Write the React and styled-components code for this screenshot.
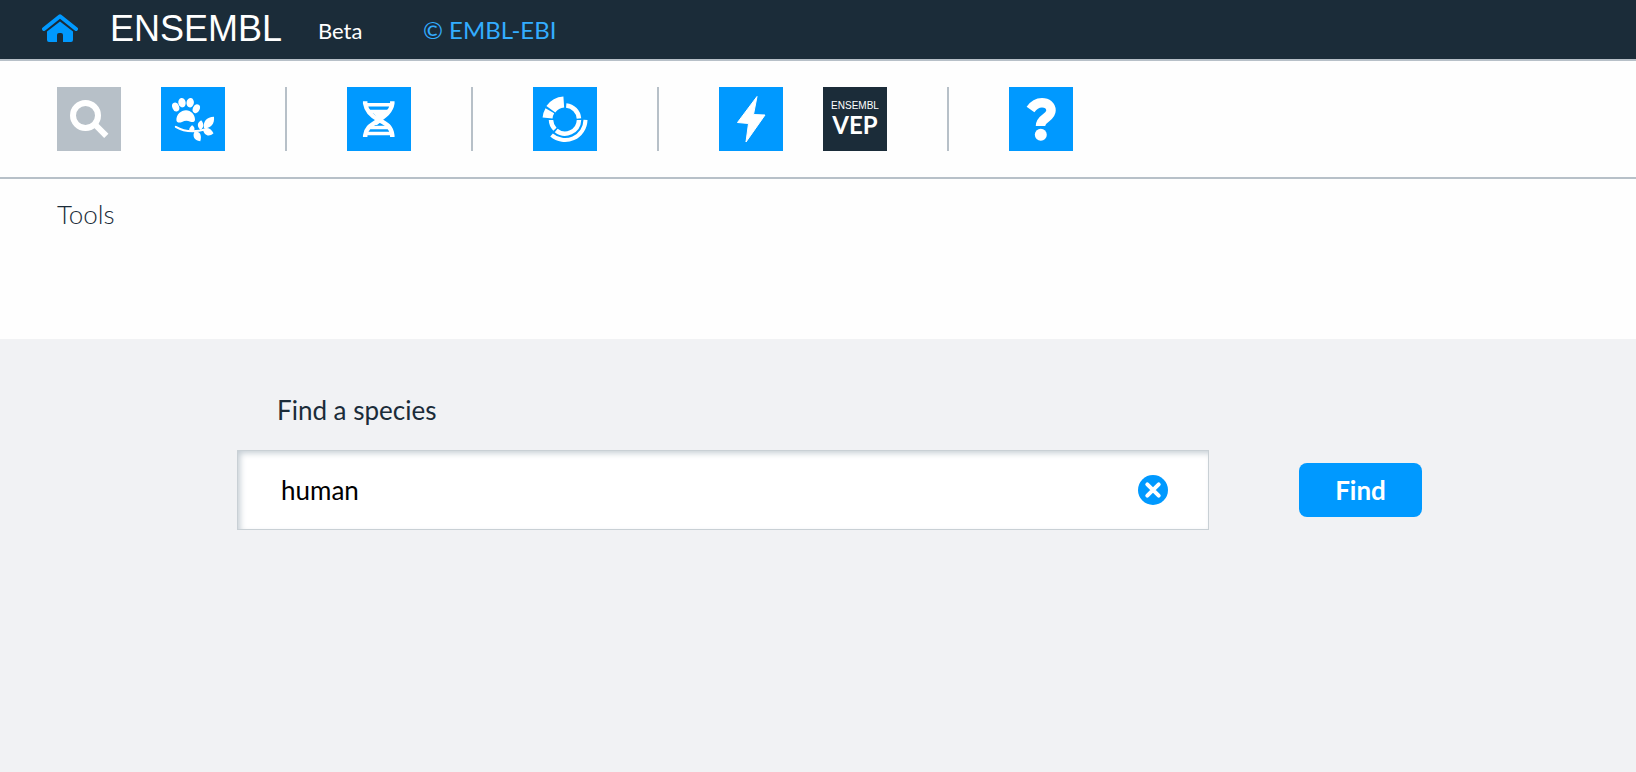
import React, { useState } from 'react';
import styled, { createGlobalStyle } from 'styled-components';

const color = {
  dark: '#1b2c39',
  blue: '#0099ff',
  link: '#33adff',
  grey: '#b7c0c8',
  rule: '#b7c0c8',
  panel: '#f1f2f4',
};

const GlobalStyle = createGlobalStyle`
  *, *::before, *::after { box-sizing: border-box; }
  body {
    margin: 0;
    background: #fefefe;
    color: ${color.dark};
    font-family: Lato, "Liberation Sans", sans-serif;
    font-size: 26px;
    line-height: 32px;
    text-rendering: optimizeLegibility;
  }
  button, input { font: inherit; }
`;

const Page = styled.div`
  display: flex;
  flex-direction: column;
  min-height: 100vh;
`;

const Header = styled.header`
  display: flex;
  align-items: center;
  height: 61px;
  padding: 0 42px 2px;
  background: ${color.dark};
  border-bottom: 2px solid ${color.rule};
`;

const HomeLink = styled.a`
  display: flex;
  margin-right: 32px;
  padding-bottom: 2px;
`;

const Wordmark = styled.span`
  min-width: 208px;
  color: #fff;
  font-family: "Liberation Sans", Arial, sans-serif;
  font-size: 36px;
  line-height: 40px;
`;

const Release = styled.span`
  min-width: 105px;
  padding-top: 4px;
  color: #fff;
  font-size: 22px;
`;

const Copyright = styled.a`
  color: ${color.link};
  font-size: 24px;
  padding-top: 2px;
  text-decoration: none;
`;

const Launchbar = styled.nav`
  display: flex;
  align-items: center;
  padding: 26px 57px;
  border-bottom: 2px solid ${color.rule};
`;

const Group = styled.div`
  display: flex;
  gap: 40px;

  & + & {
    margin-left: 60px;
    padding-left: 60px;
    border-left: 2px solid ${color.rule};
  }
`;

const AppButton = styled.button`
  display: flex;
  flex-direction: column;
  align-items: center;
  justify-content: center;
  width: 64px;
  height: 64px;
  padding: 0;
  border: 0;
  color: #fff;
  background: ${({ $tone }) => color[$tone || 'blue']};
  cursor: pointer;
`;

const VepBrand = styled.span`
  font-family: "Liberation Sans", Arial, sans-serif;
  font-size: 10px;
  line-height: 12px;
`;

const VepName = styled.span`
  font-size: 24px;
  font-weight: 700;
  line-height: 26px;
`;

const TopPanel = styled.section`
  height: 160px;
  padding: 19px 57px;
`;

const Title = styled.h1`
  margin: 0;
  font-size: 26px;
  font-weight: 300;
  line-height: 32px;
`;

const Main = styled.main`
  flex: 1;
  padding: 55px 214px 55px 237px;
  background: ${color.panel};
`;

const Label = styled.label`
  display: block;
  margin: 0 40px 24px;
`;

const SearchRow = styled.form`
  display: flex;
  align-items: center;
  gap: 90px;
`;

const Field = styled.div`
  display: flex;
  align-items: center;
  flex: 1;
  min-width: 0;
  height: 80px;
  padding: 0 40px 0 43px;
  background: #fff;
  border: 1px solid #c9d0d5;
  box-shadow: inset 3px 3px 6px -1px #c3ccd3;
`;

const Input = styled.input`
  flex: 1;
  min-width: 0;
  padding: 0;
  border: 0;
  outline: 0;
  background: transparent;
  color: #000;
`;

const ClearButton = styled.button`
  display: flex;
  padding: 0;
  border: 0;
  background: transparent;
  cursor: pointer;
`;

const FindButton = styled.button`
  width: 123px;
  height: 54px;
  padding: 0;
  border: 0;
  border-radius: 8px;
  background: ${color.blue};
  color: #fff;
  font-weight: 700;
  cursor: pointer;
`;

const Icon = ({ children }) => (
  <svg width="64" height="64" viewBox="0 0 64 64" fill="currentColor" aria-hidden="true">
    {children}
  </svg>
);

const HomeIcon = () => (
  <svg width="36" height="28" viewBox="0 0 36 28" aria-hidden="true">
    <path d="M2 15 18 2.3 34 15" fill="none" stroke={color.blue} strokeWidth="4" strokeLinecap="round" strokeLinejoin="round" />
    <path d="M5 17.5 18 7.5l13 10V26q0 2-2 2h-8v-7q0-2-2-2h-2q-2 0-2 2v7H7q-2 0-2-2z" fill={color.blue} />
  </svg>
);

const SearchIcon = () => (
  <Icon>
    <g fill="none" stroke="currentColor" strokeWidth="6">
      <circle cx="28.5" cy="28.5" r="12.5" />
      <path d="M37.5 37 49.3 48.8" />
    </g>
  </Icon>
);

const SpeciesIcon = () => (
  <Icon>
    <ellipse cx="14.7" cy="20" rx="3.4" ry="4.6" transform="rotate(-22 14.7 20)" />
    <ellipse cx="21" cy="15.7" rx="3.7" ry="4.7" transform="rotate(-8 21 15.7)" />
    <ellipse cx="29.2" cy="15.7" rx="3.7" ry="4.7" transform="rotate(10 29.2 15.7)" />
    <ellipse cx="35.3" cy="21.7" rx="3.4" ry="4.6" transform="rotate(24 35.3 21.7)" />
    <path d="M15.4 33.2C15.2 27.5 20 23.2 25 23.2c5 0 9 4.5 9 9.2 0 2.700-2.500 3.100-4.600 2.300-3.300-1.200-5.300-1.100-8.400.2-2.600 1.100-5.400.8-5.600-1.700z" />
    <path d="M14.8 39.8C21 43.5 30 46.4 45 42.2" fill="none" stroke="currentColor" strokeWidth="2" strokeLinecap="round" />
    <path d="M32.500 44.800c-4.200.2-6.300-2.500-1.500-6.600 2.500 1.500 3.300 3.900 1.500 6.600z" />
    <path d="M39.500 43c-4-3.500-3.200-7.500.7-9.700 3 3.500 3 7.200-.7 9.700z" />
    <path d="M43 41c-1.200-6.600 2.500-10.800 10-11.300.7 7.400-3.500 12-10 11.300z" />
    <path d="M42 42.500c3.300-3 7.800-1.600 10.500 3.800-4.500 4.100-9.500 2.200-10.500-3.800z" />
    <path d="M33.500 44.500c5.600-.6 7.500 3.500 5.800 9.800-6.500-.8-8-5.300-5.800-9.800z" />
  </Icon>
);

const DnaIcon = () => (
  <Icon>
    <g fill="none" stroke="currentColor" strokeWidth="4.500">
      <path d="M18.200 14.200v2.300C19.500 25 24.500 29.200 32 33c7.800 4 12.300 6.500 13.300 15.500v1.500" />
      <path d="M45.300 14.200v2.300C44 25 37.500 29 32 33c-7.500 5-12.800 7-13.800 15.500v1.500" />
    </g>
    <path d="M18 17.700h28M22 24.500h19M22 40.500h20M18 46.500h28" fill="none" stroke="currentColor" strokeWidth="3.600" />
    <path d="m25 25 7 7 8-7zM24 38l6-5 4 2-4 3z" />
  </Icon>
);

// Annular segment around the icon centre; angles are clockwise degrees from the top.
const arc = (radius, from, to) => {
  const point = (deg) => {
    const a = (deg * Math.PI) / 180;
    return `${32 + radius * Math.sin(a)} ${32.5 - radius * Math.cos(a)}`;
  };
  return `M${point(from)}A${radius} ${radius} 0 ${to - from > 180 ? 1 : 0} 1 ${point(to)}`;
};

const GenomeIcon = () => (
  <Icon>
    <g fill="none" stroke="currentColor">
      <path d={arc(14, 5, 86)} strokeWidth="4.500" />
      <path d={arc(14, 92, 219)} strokeWidth="4.500" />
      <path d={arc(14, 226, 268)} strokeWidth="4.500" />
      <path d={arc(17.5, 306, 356)} strokeWidth="11" />
      <path d={arc(17.5, 275, 300)} strokeWidth="10" />
      <path d={arc(20.5, 91, 221)} strokeWidth="4" />
    </g>
  </Icon>
);

const BoltIcon = () => (
  <Icon>
    <path d="m38 9.500-3.500 18L46 28 27 55l2.500-18.500-11-1z" stroke="currentColor" strokeLinejoin="round" />
  </Icon>
);

const HelpIcon = () => (
  <Icon>
    <path d="M21.500 22.500C25 17.500 28.500 15.800 33 15.800c5.300 0 9 3.100 9 7.700 0 7.500-10.500 7.200-10.500 15.500" fill="none" stroke="currentColor" strokeWidth="9.500" />
    <circle cx="31.8" cy="47.8" r="6" />
  </Icon>
);

const ClearIcon = () => (
  <svg width="30" height="30" viewBox="0 0 30 30" aria-hidden="true">
    <circle cx="15" cy="15" r="15" fill={color.blue} />
    <path d="m9.300 9.300 11.400 11.400m0-11.400L9.300 20.700" stroke="#fff" strokeWidth="4" strokeLinecap="round" />
  </svg>
);

export default function App() {
  const [query, setQuery] = useState('human');

  return (
    <Page>
      <GlobalStyle />
      <Header>
        <HomeLink href="#home" aria-label="Home"><HomeIcon /></HomeLink>
        <Wordmark>ENSEMBL</Wordmark>
        <Release>Beta</Release>
        <Copyright href="#embl-ebi">© EMBL-EBI</Copyright>
      </Header>
      <Launchbar aria-label="Applications">
        <Group>
          <AppButton $tone="grey" aria-label="Search"><SearchIcon /></AppButton>
          <AppButton aria-label="Species selector"><SpeciesIcon /></AppButton>
        </Group>
        <Group>
          <AppButton aria-label="Genome browser"><DnaIcon /></AppButton>
        </Group>
        <Group>
          <AppButton aria-label="Entity viewer"><GenomeIcon /></AppButton>
        </Group>
        <Group>
          <AppButton aria-label="Blast"><BoltIcon /></AppButton>
          <AppButton $tone="dark">
            <VepBrand>ENSEMBL</VepBrand>
            <VepName>VEP</VepName>
          </AppButton>
        </Group>
        <Group>
          <AppButton aria-label="Help"><HelpIcon /></AppButton>
        </Group>
      </Launchbar>
      <TopPanel>
        <Title>Tools</Title>
      </TopPanel>
      <Main>
        <Label htmlFor="species">Find a species</Label>
        <SearchRow onSubmit={(event) => event.preventDefault()}>
          <Field>
            <Input id="species" value={query} onChange={(event) => setQuery(event.target.value)} />
            <ClearButton type="button" aria-label="Clear" onClick={() => setQuery('')}>
              <ClearIcon />
            </ClearButton>
          </Field>
          <FindButton type="submit">Find</FindButton>
        </SearchRow>
      </Main>
    </Page>
  );
}
